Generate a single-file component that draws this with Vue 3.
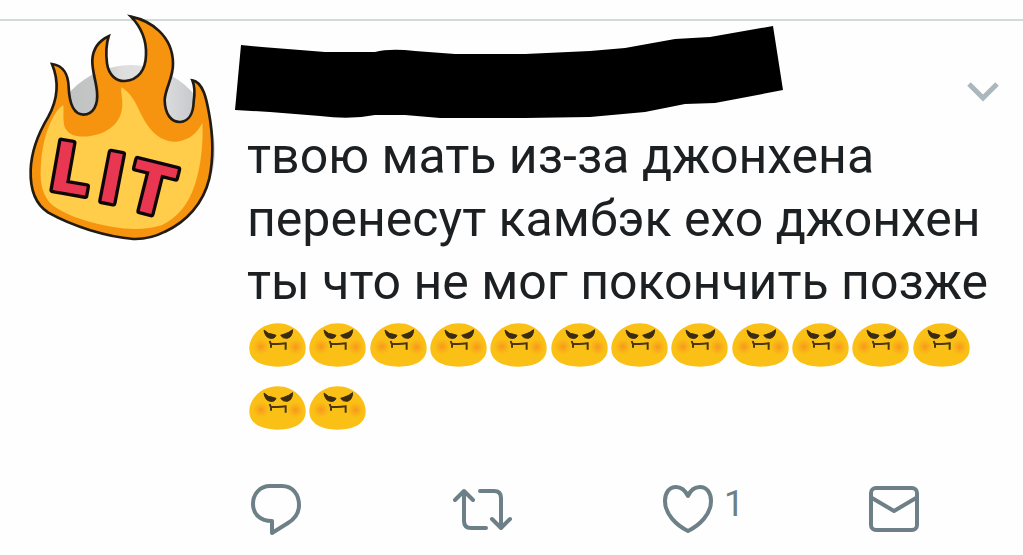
<script setup>
import { ref } from 'vue'

const faces = Array.from({ length: 14 }, (_, i) => i)
const likes = ref(1)
</script>

<template>
  <article class="post">
    <div class="avatar">
      <svg class="sticker" viewBox="0 0 660 780" role="img" aria-label="LIT">
        <path
          class="flame"
          d="M363 50 C420 62 488 105 489 190 C490 235 466 262 464 300 C465 345 485 366 510 366 C536 364 550 340 551 305 C555 280 556 262 547 241 C580 246 590 300 597 340 C608 400 612 470 598 535 C580 610 530 665 465 695 C430 713 400 718 370 717 C290 710 190 680 115 638 C75 612 60 570 62 510 C64 450 85 400 115 350 C145 295 146 240 126 192 C160 196 175 225 176 262 C178 310 190 343 220 344 C250 343 265 315 261 275 C258 240 246 215 247 180 C249 145 268 122 296 109 C286 140 288 165 291 190 C296 225 318 244 345 243 C385 240 407 210 408 165 C410 115 390 78 363 50 Z"
        />
        <path
          class="glow"
          d="M160 315 C162 350 155 380 175 396 C190 411 220 412 245 407 C300 398 335 365 337 315 C338 295 332 278 334 262 C375 285 385 335 410 372 C435 410 465 426 500 425 C540 420 565 395 577 368 C580 420 575 490 556 550 C536 615 500 655 455 676 C415 689 360 690 310 681 C245 670 180 652 130 618 C98 592 90 550 92 510 C94 450 105 400 125 360 C135 340 145 325 160 315 Z"
        />
        <g class="letters">
          <text transform="translate(117 568) rotate(10)">L</text>
          <text transform="translate(261 600) rotate(11)">I</text>
          <text transform="translate(343 622) rotate(14)">T</text>
        </g>
      </svg>
    </div>

    <div class="content">
      <header class="header">
        <svg class="redaction" viewBox="235 26 548 93" aria-hidden="true">
          <path d="M241 45 L262 47 L300 50 L325 52 L375 52 Q390 48 415 51 L455 54 L525 54 L590 51 L625 48 L675 39 L710 37 L773 26 L783 90 L715 103 L685 104 L645 112 L590 117 L525 118 L440 118 L405 115 L375 115 Q350 120 320 116 L270 112 L235 110 Z" />
        </svg>
        <button class="more" type="button" aria-label="Ещё">
          <svg viewBox="0 0 34 22"><path d="M3 3 L17 17 L31 3" /></svg>
        </button>
      </header>

      <p class="text">твою мать из-за джонхена перенесут камбэк ехо джонхен ты что не мог покончить позже</p>

      <div class="faces">
        <svg v-for="n in faces" :key="n" class="face" viewBox="0 0 171 132" aria-hidden="true">
          <defs>
            <radialGradient :id="'blush' + n">
              <stop offset="0" stop-color="#f78b20" stop-opacity=".8" />
              <stop offset="1" stop-color="#f99a1c" stop-opacity="0" />
            </radialGradient>
          </defs>
          <path class="skin" d="M86 1 C136 1 170 40 170 76 C170 114 134 131 86 131 C38 131 1 114 1 76 C1 40 36 1 86 1 Z" />
          <circle cx="36" cy="71" r="24" :fill="`url(#blush${n})`" />
          <circle cx="140" cy="72" r="24" :fill="`url(#blush${n})`" />
          <path class="eye" d="M45 21 L58 31 Q69 33 81 37 Q77 48 64 46 Q48 44 45 21 Z M131 20 L119 28 Q109 33 95 37 Q101 47 115 46 Q130 42 131 20 Z" />
          <path class="mouth" d="M62 54 L65 62 Q87 65 110 61 M66 62 V74 M110 58 V80" />
        </svg>
      </div>

      <footer class="actions">
        <button type="button" aria-label="Ответить">
          <svg viewBox="0 0 56 56"><path d="M22 6 H34 C45 6 51 15 51 25 C51 34 45 40 40 43 L24 53 V41 C12 41 5 34 5 24 C5 14 12 6 22 6 Z" /></svg>
        </button>
        <button type="button" aria-label="Ретвитнуть">
          <svg viewBox="0 0 56 56"><path d="M1 20 L10 11 L19 20 M10 12 V41 Q10 48 17 48 H32 M26 11 H40 Q47 11 47 18 V47 M38 39 L47 48 L56 39" /></svg>
        </button>
        <button type="button" aria-label="Нравится">
          <svg viewBox="0 0 56 56"><path d="M28 16 C24 8 19 7 16 7 C9 7 5 13 5 21 C5 34 16 45 28 51 C40 45 51 34 51 21 C51 13 47 7 40 7 C36 7 31 9 28 16 Z" /></svg>
          <span>{{ likes }}</span>
        </button>
        <button type="button" aria-label="Личное сообщение">
          <svg viewBox="0 0 56 56"><rect x="5" y="8" width="46" height="42" rx="5" /><path d="M6 18 L28 31 L50 18" /></svg>
        </button>
      </footer>
    </div>
  </article>
</template>

<style>
body {
  background: #fefefe;
}
</style>

<style scoped>
.post {
  display: grid;
  grid-template-columns: 248px minmax(0, 1fr);
  margin-top: 19px;
  border-top: 2px solid #d3dada;
  font-family: Roboto, "Liberation Sans", sans-serif;
  color: #1c2022;
}

.avatar {
  position: relative;
  width: 168px;
  height: 172px;
  margin: 44px 0 0 47px;
  border-radius: 50%;
  background: linear-gradient(90deg, #bfc1c1 0%, #c4c5c5 30%, #dedede 45%, #e2e2e3 65%, #c9cbce 85%, #d9dadc 100%);
}

.sticker {
  position: absolute;
  left: -37px;
  top: -65px;
  width: 220px;
  height: 260px;
}

.flame {
  fill: #f6930f;
  stroke: #221b14;
  stroke-width: 8;
  stroke-linejoin: miter;
}

.glow {
  fill: #ffcd4a;
}

.letters {
  fill: #e93751;
  stroke: #0d0507;
  stroke-width: 20;
  stroke-linejoin: round;
  paint-order: stroke;
  font-size: 210px;
  font-weight: 900;
}

.content {
  padding-right: 20px;
}

.header {
  display: flex;
  justify-content: space-between;
  align-items: flex-start;
  padding-top: 5px;
}

.redaction {
  width: 548px;
  height: 93px;
  margin-left: -13px;
}

button {
  display: flex;
  padding: 0;
  border: 0;
  background: none;
  font: inherit;
  color: #6e8087;
}

button svg {
  flex: none;
  overflow: visible;
  fill: none;
  stroke: currentColor;
  stroke-width: 4;
  stroke-linejoin: round;
  stroke-linecap: round;
}

.more {
  margin: 55px 3px 0 0;
  color: #aab8bd;
}

.more svg {
  width: 34px;
  height: 22px;
  stroke-width: 5;
  stroke-linecap: butt;
  stroke-linejoin: miter;
}

.text {
  margin: 6px -10px 0 -1px;
  font-size: 50px;
  line-height: 63px;
}

.faces {
  display: grid;
  grid-template-columns: repeat(12, 1fr);
  row-gap: 19px;
  padding: 9px 30px 0 1px;
}

.face {
  width: 57px;
  height: 44px;
}

.skin {
  fill: #fac015;
}

.eye {
  fill: #3b2b12;
  stroke: #3b2b12;
  stroke-width: 3;
}

.mouth {
  fill: none;
  stroke: #4a3512;
  stroke-width: 6;
}

.actions {
  display: flex;
  justify-content: space-between;
  margin: 50px 81px 0 0;
}

.actions button {
  width: 56px;
}

.actions svg {
  width: 56px;
  height: 56px;
}

.actions span {
  padding-left: 8px;
  font-size: 36px;
  line-height: 48px;
}
</style>
